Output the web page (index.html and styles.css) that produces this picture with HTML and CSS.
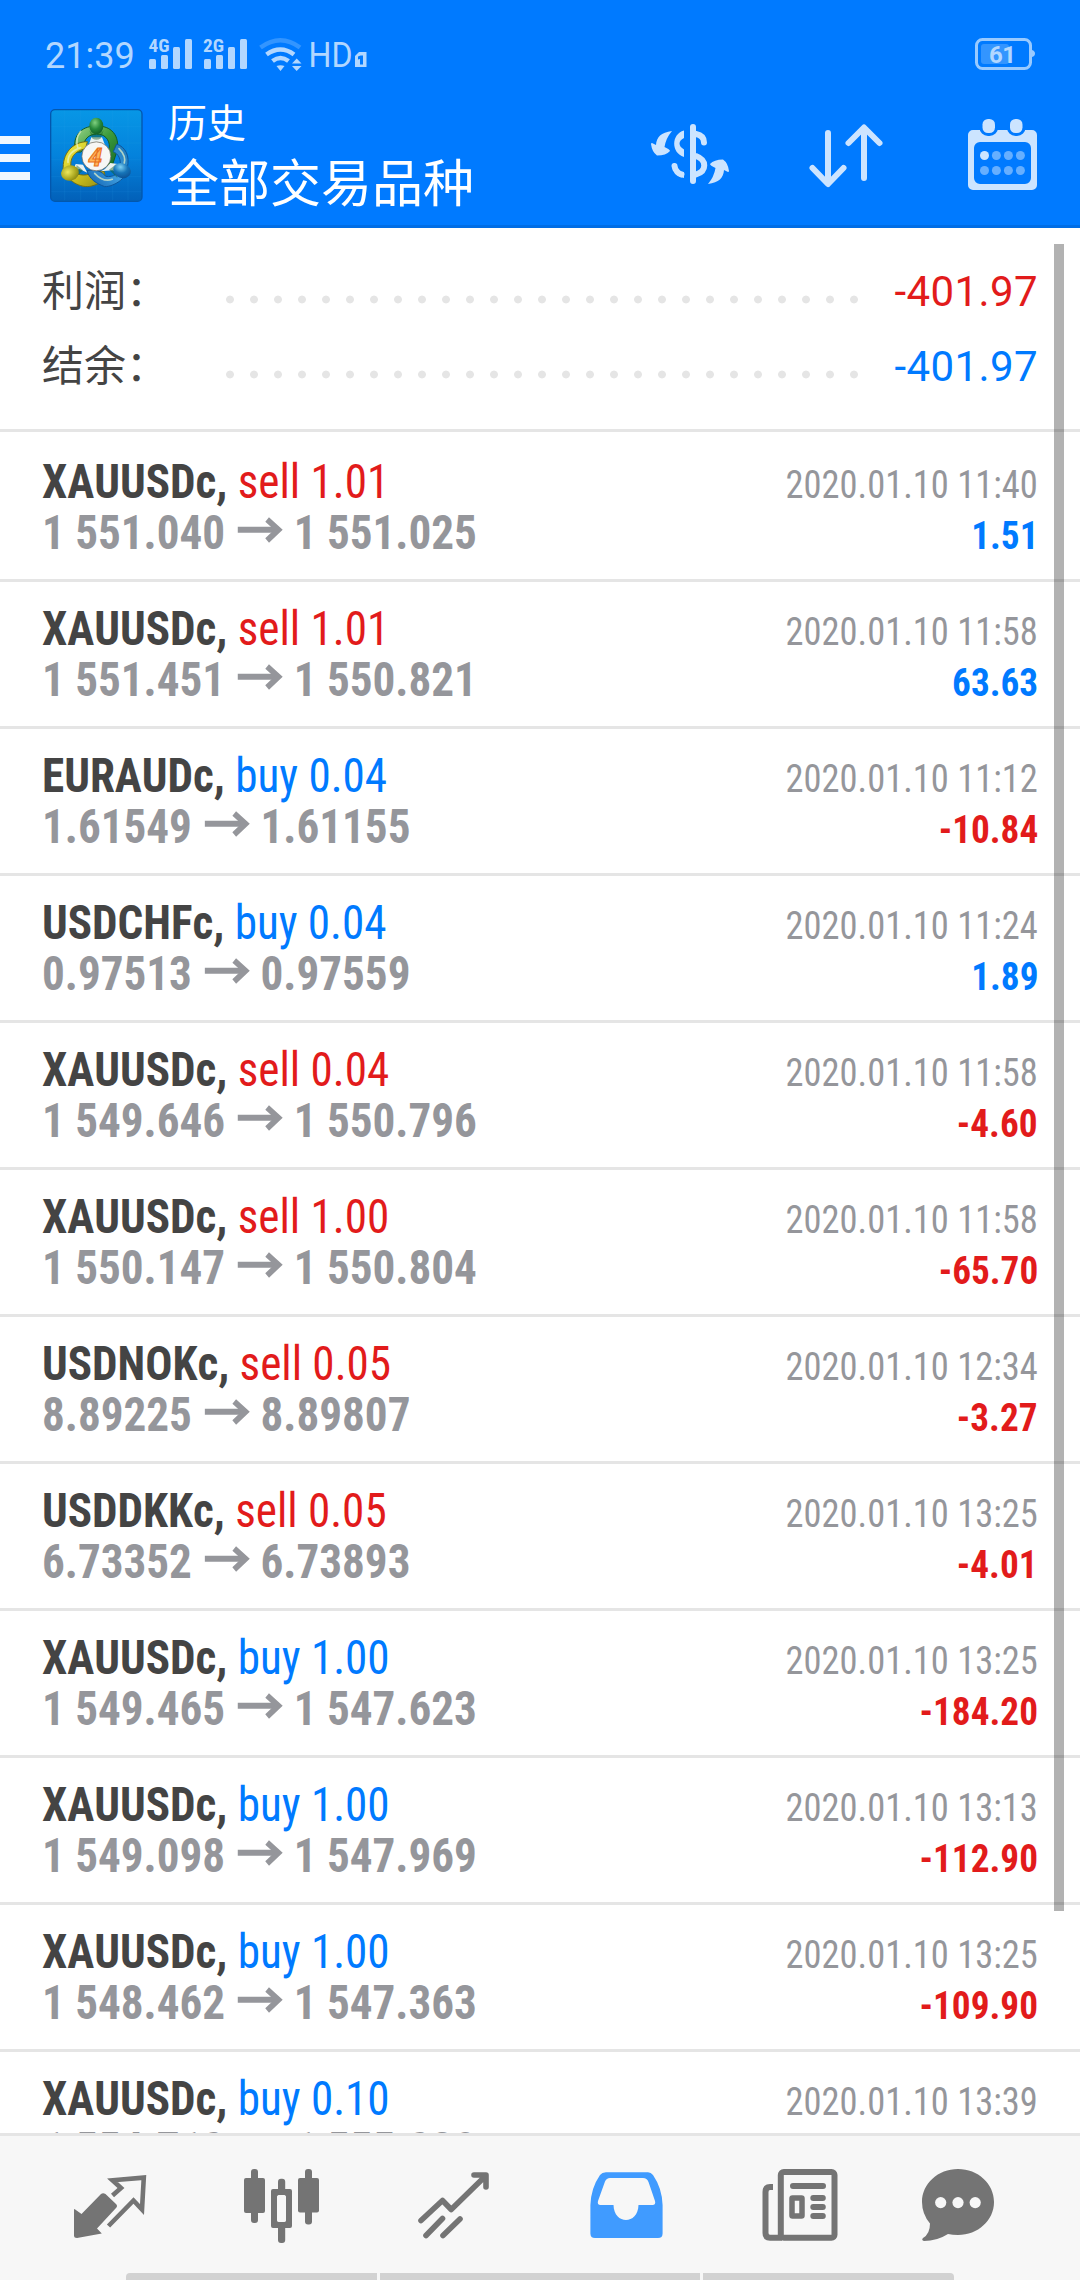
FILE: index.html
```html
<!DOCTYPE html>
<html lang="zh-CN">
<head>
<meta charset="utf-8">
<title>历史</title>
<link rel="stylesheet" href="styles.css">
</head>
<body>
<div class="app">
  <header class="header">
    <div class="status">
      <span class="clock">21:39</span>
      <svg class="signals" viewBox="140 30 240 50" fill="#b2d7ff">
        <text class="net" x="148.500" y="51.500" textLength="21" lengthAdjust="spacingAndGlyphs">4G</text>
        <g><rect x="149" y="59" width="7" height="10" rx="1.500"/><rect x="161" y="55" width="7" height="14" rx="1.500"/><rect x="173" y="47" width="7" height="22" rx="1.500"/><rect x="185" y="39" width="7" height="30" rx="1.500"/></g>
        <text class="net" x="203" y="51.500" textLength="21" lengthAdjust="spacingAndGlyphs">2G</text>
        <g><rect x="204" y="59" width="7" height="10" rx="1.500"/><rect x="216" y="55" width="7" height="14" rx="1.500"/><rect x="228" y="47" width="7" height="22" rx="1.500"/><rect x="240" y="39" width="7" height="30" rx="1.500"/></g>
        <g fill="none" stroke="#b2d7ff" stroke-width="4.600">
          <path stroke="#3395ff" d="M260.500 47.500Q280.500 33 300 47.500"/>
          <path d="M266.500 54.500Q280.500 44.500 294 54.500"/>
          <path d="M272.500 61Q280.500 55 288.500 61"/>
        </g>
        <path d="M276.500 66q4-1.500 8 0l-4 5zM292 63.500h9.500L296.700 58.500zM292 66h9.500L296.700 71z"/>
        <text class="hd" x="308.500" y="67" textLength="44" lengthAdjust="spacingAndGlyphs">HD</text>
        <path fill-rule="evenodd" d="M359 52h7.500v15H355V56zM358 56.500v3l2-.5v5.500h3V55.500h-2.500z"/>
      </svg>
      <svg class="battery" viewBox="970 30 70 50">
        <rect x="976.500" y="39.500" width="54" height="29" rx="6" fill="none" stroke="#99caff" stroke-width="3"/>
        <path d="M1032 50q3 1 3 3.500t-3 3.500z" fill="#99caff"/>
        <rect x="981" y="44" width="28" height="20" rx="3" fill="#3395ff"/>
        <text class="pct" x="989" y="63" textLength="27">61</text>
      </svg>
    </div>
    <div class="toolbar">
      <div class="menu"><i></i><i></i><i></i></div>
      <svg class="logo" viewBox="28 28 279 279">
        <defs>
          <linearGradient id="bg" x1="0" y1="0" x2="0" y2="1"><stop offset="0" stop-color="#0797e6"/><stop offset=".5" stop-color="#0482dc"/><stop offset="1" stop-color="#0260b8"/></linearGradient>
          <linearGradient id="gr" x1="0" y1="0" x2="1" y2="1"><stop offset="0" stop-color="#9bd68c"/><stop offset=".5" stop-color="#3d9c3c"/><stop offset="1" stop-color="#176a25"/></linearGradient>
          <linearGradient id="ye" x1="0" y1="0" x2="1" y2="1"><stop offset="0" stop-color="#f1ee48"/><stop offset=".6" stop-color="#c9bc1c"/><stop offset="1" stop-color="#8f8a14"/></linearGradient>
          <linearGradient id="bl" x1="0" y1="1" x2="1" y2="0"><stop offset="0" stop-color="#0f5fae"/><stop offset=".5" stop-color="#3f9fe0"/><stop offset="1" stop-color="#1b74b4"/></linearGradient>
          <radialGradient id="hg" cx=".4" cy=".3" r=".8"><stop offset="0" stop-color="#7fd07f"/><stop offset=".5" stop-color="#26883a"/><stop offset="1" stop-color="#0d5322"/></radialGradient>
          <radialGradient id="hy" cx=".4" cy=".4" r=".8"><stop offset="0" stop-color="#eee95c"/><stop offset=".6" stop-color="#a5a21b"/><stop offset="1" stop-color="#6b6b16"/></radialGradient>
          <radialGradient id="hb" cx=".35" cy=".3" r=".8"><stop offset="0" stop-color="#7fd2f4"/><stop offset=".5" stop-color="#1674b8"/><stop offset="1" stop-color="#0c4d90"/></radialGradient>
        </defs>
        <rect x="30" y="30" width="274" height="275" rx="13" fill="url(#bg)" stroke="#0357ad" stroke-width="4"/>
        <path d="M72 32v270M120 32v270M168 32v270M216 32v270M262 32v270M32 80h270M32 130h270M32 180h270M32 230h270M32 276h270" stroke="#38a7ec" stroke-opacity=".18" stroke-width="2"/>
        <path d="M104 157C92 103 130 76 168 80C210 76 239 108 229 154L216 194C202 205 183 195 184 180L206 143C208 119 189 101 168 104C145 102 126 121 130 145L121 157Z" fill="url(#gr)" stroke="#145c24" stroke-width="3"/>
        <path d="M140 126C96 126 63 162 68 213C85 248 126 270 160 257C184 251 198 234 190 215L157 217C132 235 102 224 92 207C85 177 100 154 135 147Z" fill="url(#ye)" stroke="#756f13" stroke-width="3"/>
        <path d="M228 133C255 143 268 168 260 204C265 229 224 261 192 261C168 252 146 239 139 213C163 207 185 216 195 230C219 234 237 221 238 200C242 178 233 163 218 156Z" fill="url(#bl)" stroke="#0d559a" stroke-width="3"/>
        <path d="M120 95Q102 118 112 146M120 144Q80 157 82 188M235 147Q259 171 250 194M162 221Q188 249 215 239" fill="none" stroke="#e8f4c8" stroke-opacity=".7" stroke-width="5" stroke-linecap="round"/>
        <path d="M152 113h32l10 26-28 10-22-12zM105 193l22 2 13 24-24-11-20 8zM236 194l-27-4-16 18-13 7 36-3 20 13z" fill="#e9f2f2"/>
        <path d="M146 92q21 28 43 0l-8 24q-14 9-27 0zM108 196l19 16-26 26zM227 193l-22 17 25 25z" fill="#145c24" fill-opacity=".45"/>
        <ellipse cx="167" cy="79" rx="21" ry="25" fill="url(#hg)"/>
        <ellipse cx="88" cy="220" rx="27" ry="23" transform="rotate(-18 88 220)" fill="url(#hy)"/>
        <ellipse cx="244" cy="213" rx="27" ry="22" transform="rotate(20 244 213)" fill="url(#hb)"/>
        <circle cx="167" cy="170" r="43.500" fill="#f7f7f5" stroke="#605d50" stroke-width="2"/>
        <text class="four" x="164" y="198" textLength="42" lengthAdjust="spacingAndGlyphs">4</text>
      </svg>
      <div class="titles"><div class="t1">历史</div><div class="t2">全部交易品种</div></div>
      <svg class="actions" viewBox="640 110 410 90" fill="#cce4ff">
        <g fill="none" stroke="#cce4ff" stroke-width="6" stroke-linecap="round">
          <path d="M693 127v54M696 134C701 135 704 138 704 142.500M696 156C707 160 707 171 696 174.500M674.500 166C675 171 679 174 681.500 174.500"/>
        </g>
        <path d="M684 130.500v7.500C678 141 678 146 684 149.500v7.500C671 153 671 134 684 130.500zM679 171.500l5 .5v6l-5-1.500z"/>
        <path id="turn" d="M672 131C661 132.500 656.500 137 656 145L652 143Q651 143 651 144Q652 152 657 155.500Q666 155.500 670 151Q670 149.500 664.500 147Q666 138 672 131z"/>
        <use href="#turn" transform="rotate(180 690 157.500)"/>
        <g fill="none" stroke="#cce4ff" stroke-width="6" stroke-linecap="round" stroke-linejoin="round">
          <path d="M828 133v50M812.500 168L828 184L843.500 168M864 178v-50M848.500 143L864 127.500L879.500 143"/>
        </g>
        <path fill-rule="evenodd" d="M973 130h59a5 5 0 0 1 5 5v50a5 5 0 0 1-5 5h-59a5 5 0 0 1-5-5v-50a5 5 0 0 1 5-5zM980 142a6 6 0 0 0-6 6v30a6 6 0 0 0 6 6h45a6 6 0 0 0 6-6v-30a6 6 0 0 0-6-6z"/>
        <g stroke="#007aff" stroke-width="6" paint-order="stroke">
          <rect x="982.500" y="119" width="12.500" height="14" rx="5.500"/><rect x="1010" y="119" width="12.500" height="14" rx="5.500"/>
        </g>
        <circle cx="984.500" cy="155.500" r="4.500"/>
        <g fill="#66afff"><circle cx="996.400" cy="155.500" r="4.500"/><circle cx="1008.400" cy="155.500" r="4.500"/><circle cx="1020.400" cy="155.500" r="4.500"/><circle cx="984.500" cy="170.500" r="4.500"/><circle cx="996.400" cy="170.500" r="4.500"/><circle cx="1008.400" cy="170.500" r="4.500"/><circle cx="1020.400" cy="170.500" r="4.500"/></g>
      </svg>
    </div>
  </header>

  <main class="content">
    <section class="summary">
      <div class="total"><span class="label">利润：</span><span class="dots"></span><span class="sum red">-401.97</span></div>
      <div class="total"><span class="label">结余：</span><span class="dots"></span><span class="sum blue">-401.97</span></div>
    </section>
    <section class="deals" id="deals"></section>
    <div class="scrollbar"></div>
  </main>

  <nav class="tabs">
    <svg viewBox="0 2136 180 137">
      <path d="M74.500 2209L81.500 2214L101 2194Q103 2192.500 105.500 2194L116 2204Q118 2206 116 2208L97 2228.500L101.800 2233.500L77 2238Q74 2238 74 2235.500V2209.500z"/>
      <path fill="none" stroke-width="4.600" d="M112.500 2195.500L121 2188L112.500 2180.300L143.800 2177.600L142 2209.500L133.500 2200.500L108.500 2226"/>
    </svg>
    <svg viewBox="180 2136 180 137">
      <rect x="244" y="2178" width="21" height="35" rx="2"/><rect x="251" y="2169" width="7" height="54" rx="3"/>
      <rect x="298" y="2178" width="21" height="34.500" rx="2"/><rect x="305" y="2169" width="7" height="55.500" rx="3"/>
      <rect x="278" y="2178.700" width="7.200" height="16" rx="3"/><rect x="278" y="2223" width="7.200" height="20" rx="3"/>
      <path fill-rule="evenodd" d="M273 2189h17a2 2 0 0 1 2 2v35a2 2 0 0 1-2 2h-17a2 2 0 0 1-2-2v-35a2 2 0 0 1 2-2zM279.500 2195q-2.500 0-2.500 2.500v22q0 2.500 2.500 2.500h4q2.500 0 2.500-2.500v-22q0-2.500-2.500-2.500z"/>
      <rect class="pips" x="277" y="2195" width="9" height="27" rx="2.500"/>
    </svg>
    <svg viewBox="360 2136 180 137">
      <g fill="none" stroke-width="5.600" stroke-linecap="round" stroke-linejoin="round"><path d="M421 2220.500L442.500 2200.500L451.200 2209.500L485 2176.500M474 2175H486V2187"/><path d="M426 2235.500L442.500 2218.500M443 2235.500L460 2219"/></g>
    </svg>
    <svg class="on" viewBox="540 2136 180 137">
      <path fill-rule="evenodd" d="M606 2172.300H648Q651 2172.300 653 2175Q662 2188 662.600 2205V2233.500Q662.600 2238 658 2238H595Q590.400 2238 590.400 2233.500V2205Q591 2188 600 2175Q602 2172.300 606 2172.300zM610 2178Q606.500 2178 605 2181.500L598 2201Q597 2205 600.500 2205H613.500C614 2225 638 2225 638.500 2205H652.500Q656 2205 655 2201L648.500 2182Q647 2178 643 2178z"/>
    </svg>
    <svg viewBox="720 2136 180 137">
      <g fill="none" stroke-width="6"><rect x="780.800" y="2172" width="53.700" height="65.700" rx="3"/><path d="M773 2187h-3q-4.500 0-4.500 5v41q0 4.700 4.500 4.700h12"/><rect x="792" y="2198" width="10" height="18" rx=".5" stroke-width="5.500"/><path stroke-linecap="round" d="M793 2186h30M813.300 2198h9.500M813.300 2207h9.500M813.300 2216h9.500"/></g>
    </svg>
    <svg viewBox="900 2136 180 137">
      <path d="M958 2169c20 0 36 14.700 36 33s-16 33-36 33q-5.500 0-10-1q-11 7-24 7q-3-1-1-3q7-4 7-14.500q-8-9.500-8-21.500c0-18.300 16-33 36-33z"/>
      <g class="pips"><circle cx="940.700" cy="2202.600" r="5.600"/><circle cx="958" cy="2202.600" r="5.600"/><circle cx="975.200" cy="2202.600" r="5.600"/></g>
    </svg>
  </nav>
  <div class="gesture"><i></i><i></i><i></i></div>
</div>
<script src="deals.js"></script>
</body>
</html>
```
FILE: styles.css
```css
* { box-sizing: border-box; }
body { margin: 0; background: #fff; font-family: Roboto, "Noto Sans CJK SC", sans-serif; }
.app { width: 1080px; height: 2280px; display: flex; flex-direction: column; overflow: hidden; }
svg { display: block; }

.header { height: 228px; background: #007aff; border-bottom: 3px solid #006de5; display: flex; flex-direction: column; flex: none; }
.status { height: 80px; padding: 30px 40px 0 45px; display: flex; color: #b2d7ff; }
.clock { width: 95px; padding-top: 1px; font-size: 36px; font-weight: 450; line-height: 50px; }
.signals { width: 240px; height: 50px; }
.battery { width: 70px; height: 50px; margin-left: auto; }
.net { font: 700 18px "Roboto Condensed", sans-serif; }
.hd { font: 400 35.500px Roboto, sans-serif; }
.pct { font: 700 24px Roboto, sans-serif; fill: #b2d7ff; }

.toolbar { display: flex; flex: 1; }
.menu { width: 30px; padding-top: 56px; display: flex; flex-direction: column; gap: 10px; }
.menu i { height: 8px; background: #f0f7ff; }
.logo { width: 93px; height: 93px; margin: 29px 0 0 20px; }
.four { font: italic 700 78px "Roboto Condensed", sans-serif; text-anchor: middle; fill: #ffb65a; stroke: #e86f1c; stroke-width: 3px; }
.titles { flex: 1; padding: 12px 0 0 25px; color: #fff; font-family: "Noto Sans CJK SC", sans-serif; font-weight: 375; white-space: nowrap; }
.t1 { font-size: 39px; line-height: 56px; }
.t2 { font-size: 51px; line-height: 64px; }
.actions { width: 410px; height: 90px; margin: 30px 30px 0 0; }

.content { flex: 1; position: relative; overflow: hidden; }
.summary { height: 204px; padding: 26px 42px 0; border-bottom: 3px solid #e5e5e5; }
.total { height: 75px; display: flex; align-items: flex-start; font-size: 42px; line-height: 75px; }
.label { width: 184px; color: #444; font-family: "Noto Sans CJK SC", sans-serif; font-weight: 375; line-height: 68px; }
.dots { width: 648px; height: 75px; background: radial-gradient(circle at 4px 45.500px, #e5e5e5 3.500px, transparent 4.300px) 0 0 / 24px 75px; }
.sum { margin-left: auto; letter-spacing: .4px; }
.red { color: #e21b1b; }
.blue { color: #007aff; }

.deals { padding-top: 3px; font-family: "Roboto Condensed", Roboto, sans-serif; font-kerning: none; }
.deal { height: 147px; padding: 21px 42px 0; border-bottom: 3px solid #e5e5e5; }
.line { height: 51px; display: flex; justify-content: space-between; align-items: baseline; line-height: 51px; font-size: 48px; white-space: pre; }
.name, .prices { transform: scaleX(.94); transform-origin: left; }
.name b { color: #444; }
.prices { color: #95969b; font-weight: 700; }
.prices svg { display: inline-block; width: 50px; height: 26px; margin: 0 10px 0 13px; vertical-align: 6px; }
.time, .result { font-size: 39px; transform-origin: right; transform: scaleX(.935); }
.time { color: #95969b; font-weight: 430; }
.result { font-weight: 700; transform: scaleX(.955); }
.scrollbar { position: absolute; right: 16px; top: 16px; width: 10px; height: 1667px; background: rgba(0, 0, 0, .3); }

.tabs { height: 140px; flex: none; display: flex; background: #f7f7f7; border-top: 3px solid #e5e5e5; }
.tabs svg { width: 180px; height: 137px; fill: #747474; stroke: none; }
.tabs svg [fill="none"] { stroke: #747474; }
.tabs .on { fill: #409bff; }
.tabs .pips { fill: #f7f7f7; }
.gesture { height: 7px; flex: none; display: flex; gap: 3px; padding: 0 126px; background: #f7f7f7; }
.gesture i { flex: 251px 0 0; background: #d2d2d2; }
.gesture i:nth-child(2) { flex-basis: 320px; }
.gesture i:first-child { border-top-left-radius: 4px; }
.gesture i:last-child { border-top-right-radius: 4px; }
```
FILE: deals.js
```js
const deals = [
  ["XAUUSDc", "sell 1.01", "1 551.040", "1 551.025", "2020.01.10 11:40", "1.51"],
  ["XAUUSDc", "sell 1.01", "1 551.451", "1 550.821", "2020.01.10 11:58", "63.63"],
  ["EURAUDc", "buy 0.04", "1.61549", "1.61155", "2020.01.10 11:12", "-10.84"],
  ["USDCHFc", "buy 0.04", "0.97513", "0.97559", "2020.01.10 11:24", "1.89"],
  ["XAUUSDc", "sell 0.04", "1 549.646", "1 550.796", "2020.01.10 11:58", "-4.60"],
  ["XAUUSDc", "sell 1.00", "1 550.147", "1 550.804", "2020.01.10 11:58", "-65.70"],
  ["USDNOKc", "sell 0.05", "8.89225", "8.89807", "2020.01.10 12:34", "-3.27"],
  ["USDDKKc", "sell 0.05", "6.73352", "6.73893", "2020.01.10 13:25", "-4.01"],
  ["XAUUSDc", "buy 1.00", "1 549.465", "1 547.623", "2020.01.10 13:25", "-184.20"],
  ["XAUUSDc", "buy 1.00", "1 549.098", "1 547.969", "2020.01.10 13:13", "-112.90"],
  ["XAUUSDc", "buy 1.00", "1 548.462", "1 547.363", "2020.01.10 13:25", "-109.90"],
  ["XAUUSDc", "buy 0.10", "1 554.712", "1 555.230", "2020.01.10 13:39", "-5.18"]
];
const arrow = '<svg viewBox="0 0 50 26" fill="none" stroke="#95969b"><path stroke-width="6" d="M0 12.700H44"/><path stroke-width="6" d="M31.500 2.500L43.500 12.700L31.500 23.500"/></svg>';
document.getElementById("deals").innerHTML = deals.map(([symbol, side, open, close, time, result]) => `
  <article class="deal">
    <div class="line"><span class="name"><b>${symbol},</b> <span class="${side.startsWith("sell") ? "red" : "blue"}">${side}</span></span><span class="time">${time}</span></div>
    <div class="line"><span class="prices">${open}${arrow}${close}</span><span class="result ${result.startsWith("-") ? "red" : "blue"}">${result}</span></div>
  </article>`).join("");
```
